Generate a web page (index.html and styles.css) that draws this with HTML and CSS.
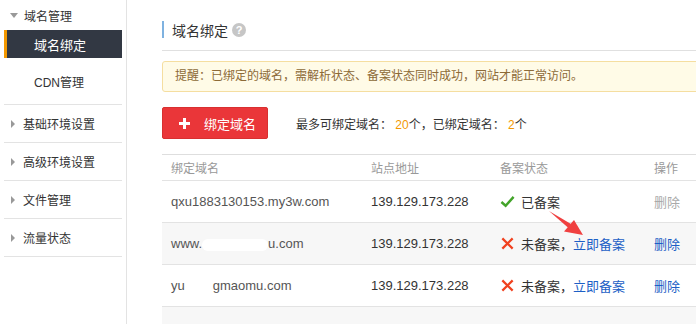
FILE: index.html
```html
<!DOCTYPE html>
<html lang="zh-CN">
<head>
  <meta charset="UTF-8">
  <title>域名绑定</title>
  <link rel="stylesheet" href="styles.css">
</head>
<body>
  <div class="layout">
    <aside class="sidebar">
      <div class="menu-group open">
        <div class="menu-title"><span class="caret down"></span>域名管理</div>
        <a class="menu-item active" href="#">域名绑定</a>
        <a class="menu-item" href="#">CDN管理</a>
      </div>
      <div class="menu-group"><div class="menu-title"><span class="caret"></span>基础环境设置</div></div>
      <div class="menu-group"><div class="menu-title"><span class="caret"></span>高级环境设置</div></div>
      <div class="menu-group"><div class="menu-title"><span class="caret"></span>文件管理</div></div>
      <div class="menu-group"><div class="menu-title"><span class="caret"></span>流量状态</div></div>
    </aside>

    <main class="content">
      <div class="page-title">
        <h2>域名绑定</h2>
        <span class="help">?</span>
      </div>

      <div class="notice">提醒：已绑定的域名，需解析状态、备案状态同时成功，网站才能正常访问。</div>

      <div class="toolbar">
        <button class="btn-add"><span class="plus"></span>绑定域名</button>
        <p class="quota">最多可绑定域名： <em>20</em>个，已绑定域名： <em>2</em>个</p>
      </div>

      <div class="table">
        <div class="row head">
          <span>绑定域名</span><span>站点地址</span><span>备案状态</span><span>操作</span>
        </div>
        <div class="row">
          <span class="domain">qxu1883130153.my3w.com</span>
          <span>139.129.173.228</span>
          <span class="status"><svg class="ico" viewBox="0 0 16 16"><path d="M1.5 8.5 L6 12.5 L14.5 3" fill="none" stroke="#43a42a" stroke-width="2.6"/></svg>已备案</span>
          <span class="op disabled">删除</span>
        </div>
        <div class="row alt">
          <span class="domain">www.<i class="smudge"></i>u.com</span>
          <span>139.129.173.228</span>
          <span class="status"><svg class="ico" viewBox="0 0 16 16"><path d="M2.5 2.5 L13.5 13.5 M13.5 2.5 L2.5 13.5" stroke="#f0411f" stroke-width="2.4"/></svg>未备案，<a href="#">立即备案</a></span>
          <span class="op"><a href="#">删除</a></span>
          <svg class="arrow" viewBox="0 0 40 26"><path d="M2 1 L24 14 L21.5 18 Z" fill="#f04040"/><path d="M36 25 L17 21.5 L27 10 Z" fill="#f04040"/></svg>
        </div>
        <div class="row">
          <span class="domain">yu<i class="smudge short"></i>gmaomu.com</span>
          <span>139.129.173.228</span>
          <span class="status"><svg class="ico" viewBox="0 0 16 16"><path d="M2.5 2.5 L13.5 13.5 M13.5 2.5 L2.5 13.5" stroke="#f0411f" stroke-width="2.4"/></svg>未备案，<a href="#">立即备案</a></span>
          <span class="op"><a href="#">删除</a></span>
        </div>
        <div class="row alt"></div>
      </div>
    </main>
  </div>
</body>
</html>
```

FILE: styles.css
```css
* {
  margin: 0;
  padding: 0;
  box-sizing: border-box;
}

html,
body {
  height: 324px;
  overflow: hidden;
}

body {
  font-family: "Liberation Sans", "Noto Sans CJK SC", sans-serif;
  font-size: 12px;
  color: #333;
  background: #fff;
}

.layout {
  display: flex;
  width: 760px;
  height: 324px;
}

/* Sidebar */
.sidebar {
  flex: none;
  width: 127px;
  border-right: 1px solid #e3e3e3;
  padding: 0 4px;
}

.menu-group {
  border-bottom: 1px solid #e3e3e3;
}

.menu-group.open {
  padding-bottom: 9px;
}

.menu-title {
  display: flex;
  align-items: center;
  height: 37px;
  padding-left: 7px;
}

.menu-group.open .menu-title {
  height: 30px;
  padding-left: 6px;
}

.caret {
  width: 0;
  height: 0;
  margin-right: 8px;
  border-top: 4px solid transparent;
  border-bottom: 4px solid transparent;
  border-left: 4px solid #999;
}

.caret.down {
  margin-right: 6px;
  border-left: 4px solid transparent;
  border-right: 4px solid transparent;
  border-top: 5px solid #999;
  border-bottom: 0;
}

.menu-item {
  display: flex;
  align-items: center;
  height: 28px;
  padding-left: 30px;
  color: #333;
  text-decoration: none;
}

.menu-item + .menu-item {
  margin-top: 9px;
}

.menu-item.active {
  background: #323843;
  border-left: 3px solid #f39800;
  padding-left: 27px;
  color: #fff;
  font-size: 13px;
}

/* Content */
.content {
  flex: none;
  width: 600px;
  padding: 21px 0 0 35px;
}

.page-title {
  display: flex;
  align-items: center;
  height: 17px;
  padding-left: 8px;
  border-left: 2px solid #7fb2e0;
}

.page-title h2 {
  font-size: 14px;
  font-weight: normal;
  color: #333;
}

.help {
  display: flex;
  align-items: center;
  justify-content: center;
  width: 14px;
  height: 14px;
  margin-left: 4px;
  border-radius: 50%;
  background: #c6c6c6;
  color: #fff;
  font-size: 11px;
  font-weight: bold;
}

.notice {
  position: relative;
  height: 31px;
  margin-top: 23px;
  padding-left: 12px;
  border: 1px solid #f5dea0;
  border-radius: 3px;
  background: #fffbe7;
  color: #8d6a37;
  line-height: 29px;
}

/* divider under the page title */
.notice::before {
  content: "";
  position: absolute;
  left: -1px;
  right: -1px;
  top: -12px;
  border-top: 1px solid #e0e0e0;
}

.toolbar {
  display: flex;
  align-items: center;
  margin-top: 15px;
  padding-bottom: 15px;
  border-bottom: 1px solid #dedede;
}

.btn-add {
  display: flex;
  align-items: center;
  width: 106px;
  height: 32px;
  padding-left: 16px;
  border: 1px solid #d83030;
  border-radius: 2px;
  background: #ea3639;
  color: #fff;
  font-family: inherit;
  font-size: 13px;
}

.plus {
  position: relative;
  width: 11px;
  height: 11px;
  margin-right: 14px;
}

.plus::before,
.plus::after {
  content: "";
  position: absolute;
  background: #fff;
}

.plus::before {
  left: 4px;
  top: 0;
  width: 3px;
  height: 11px;
}

.plus::after {
  left: 0;
  top: 4px;
  width: 11px;
  height: 3px;
}

.quota {
  margin-left: 28px;
  color: #333;
}

.quota em {
  font-style: normal;
  color: #f39800;
}

/* Table */
.row {
  position: relative;
  display: grid;
  grid-template-columns: 200px 129px 154px 1fr;
  align-items: center;
  height: 42px;
  border-bottom: 1px solid #e3e3e3;
  font-size: 13px;
}

.row > span {
  padding-left: 9px;
}

.row.head {
  height: 26px;
  color: #999;
  font-size: 12px;
}

.row.alt {
  background: #f7f7f7;
}

.domain {
  color: #555;
}

.smudge {
  display: inline-block;
  width: 66px;
  height: 12px;
  vertical-align: middle;
  background: #fff;
  border-radius: 6px;
}

.smudge.short {
  width: 28px;
}

.status {
  display: flex;
  align-items: center;
}

.ico {
  width: 15px;
  height: 15px;
  margin-right: 6px;
}

.status a,
.op a {
  color: #1d5fc6;
  text-decoration: none;
}

.op.disabled {
  color: #aaa;
}

.arrow {
  position: absolute;
  left: 385px;
  top: -13px;
  width: 40px;
  height: 26px;
}
```
